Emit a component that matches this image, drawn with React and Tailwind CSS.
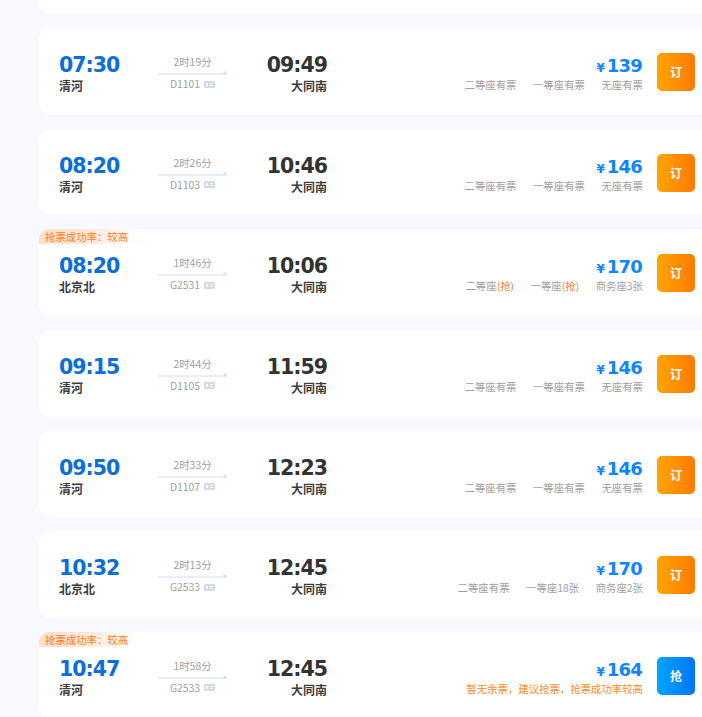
const rows = [
  { first: true },
  { dep: "07:30", from: "清河", dur: "2时19分", no: "D1101", arr: "09:49", price: "139", seats: ["二等座有票", "一等座有票", "无座有票"] },
  { dep: "08:20", from: "清河", dur: "2时26分", no: "D1103", arr: "10:46", price: "146", seats: ["二等座有票", "一等座有票", "无座有票"] },
  { dep: "08:20", from: "北京北", dur: "1时46分", no: "G2531", arr: "10:06", price: "170", tag: true, rob: true, seats: ["二等座", "一等座", "商务座3张"] },
  { dep: "09:15", from: "清河", dur: "2时44分", no: "D1105", arr: "11:59", price: "146", seats: ["二等座有票", "一等座有票", "无座有票"] },
  { dep: "09:50", from: "清河", dur: "2时33分", no: "D1107", arr: "12:23", price: "146", seats: ["二等座有票", "一等座有票", "无座有票"] },
  { dep: "10:32", from: "北京北", dur: "2时13分", no: "G2533", arr: "12:45", price: "170", seats: ["二等座有票", "一等座18张", "商务座2张"] },
  { dep: "10:47", from: "清河", dur: "1时58分", no: "G2533", arr: "12:45", price: "164", tag: true, blue: true, note: "暂无余票，建议抢票，抢票成功率较高", seats: [] },
];

const num = { fontFamily: '"DejaVu Sans", sans-serif' };

function Arrow() {
  return (
    <svg width="69" height="4" viewBox="0 0 69 4" className="block">
      <path d="M0 3H69L66 0.5V3" fill="#d6dce8" stroke="#d6dce8" strokeWidth="1" />
    </svg>
  );
}

function Ticket() {
  return (
    <svg width="11" height="7" viewBox="0 0 11 7" className="block ml-[4px]">
      <rect width="11" height="7" rx="1" fill="#d5dbe5" />
      <rect x="2" y="2" width="2" height="3" fill="#f4f6fa" />
      <rect x="6" y="2" width="3" height="1" fill="#f4f6fa" />
      <rect x="6" y="4" width="3" height="1" fill="#f4f6fa" />
    </svg>
  );
}

function Card({ r }) {
  if (r.first) {
    return <div className="w-[680px] h-[86.67px] rounded-[12px] bg-white shrink-0" />;
  }
  return (
    <div className="relative w-[680px] h-[86.67px] rounded-[12px] bg-white shrink-0 flex items-start pl-5 pr-6 pt-[24px]">
      {r.tag && (
        <div className="absolute left-0 top-0 w-[100px] h-[15px] rounded-tl-[10px] pl-[6px] text-[10.4px] leading-[15px] text-[#ff7d26] bg-gradient-to-r from-[#ffdfc7] via-[#ffe9d9] to-[#ffffff]">
          抢票成功率：较高
        </div>
      )}
      <div className="w-[99px]">
        <div className="text-[20.5px] leading-[24px] mt-[1px] tracking-[-1px] font-bold text-[#0a6fd8]" style={num}>{r.dep}</div>
        <div className="text-[12px] leading-[16px] mt-[1px] font-bold text-[#3d3d3d]">{r.from}</div>
      </div>
      <div className="w-[69px] flex flex-col items-center pt-[3px]">
        <div className="text-[10.4px] leading-[14px] text-[#a0a0a0]">{r.dur}</div>
        <div className="mt-[2px] w-full"><Arrow /></div>
        <div className="mt-[2px] flex items-center text-[10.4px] leading-[14px] text-[#a0a0a0]">
          {r.no}
          <Ticket />
        </div>
      </div>
      <div className="w-[100px] text-right">
        <div className="text-[20.5px] leading-[24px] mt-[1px] tracking-[-1px] font-bold text-[#333333]" style={num}>{r.arr}</div>
        <div className="text-[12px] leading-[16px] mt-[1px] font-bold text-[#3d3d3d]">大同南</div>
      </div>
      <div className="flex-1 flex flex-col items-end pt-[3px]">
        <div className="flex items-baseline leading-[22px] mr-[1px] text-[#0f85ff] font-bold" style={num}>
          <span className="text-[12px] mr-[2px]">¥</span>
          <span className="text-[18px] tracking-[-0.8px]">{r.price}</span>
        </div>
        {r.note ? (
          <div className="text-[10.4px] leading-[14px] -mt-[1px] text-[#ff8a2a]">{r.note}</div>
        ) : (
          <div className="flex gap-[16.5px] text-[10.4px] leading-[14px] -mt-[1px] text-[#a0a0a0]">
            {r.seats.map((s, i) => (
              <span key={i}>
                {s}
                {r.rob && i < 2 && <span className="text-[#ff7d26]">(抢)</span>}
              </span>
            ))}
          </div>
        )}
      </div>
      <div
        className={
          "ml-[14px] mt-[1px] w-[38px] h-[38px] rounded-[5px] flex items-center justify-center text-white text-[12px] font-bold bg-gradient-to-r " +
          (r.blue ? "from-[#00a5ff] to-[#0073ff]" : "from-[#ffa400] to-[#ff7a00]")
        }
      >
        {r.blue ? "抢" : "订"}
      </div>
    </div>
  );
}

export default function App() {
  return (
    <div
      className="w-[702px] h-[717px] overflow-hidden bg-[#f8f9fe] pl-[39px]"
      style={{ fontFamily: '"Noto Sans CJK SC", "Noto Sans", sans-serif' }}
    >
      <div className="flex flex-col gap-[14px] -mt-[72.67px]">
        {rows.map((r, i) => (
          <Card key={i} r={r} />
        ))}
      </div>
    </div>
  );
}
